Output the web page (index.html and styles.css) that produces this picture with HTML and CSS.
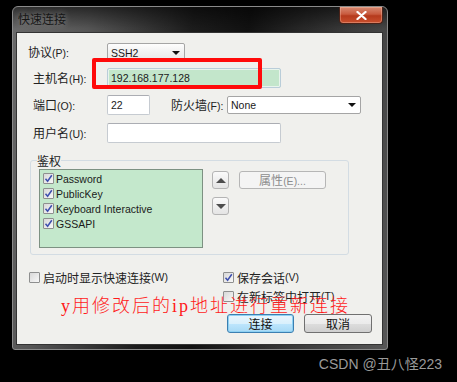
FILE: index.html
```html
<!DOCTYPE html>
<html lang="zh-CN">
<head>
    <meta charset="UTF-8">
    <meta name="viewport" content="width=device-width, initial-scale=1.0">
    <title>快速连接</title>
    <link rel="stylesheet" href="styles.css">
</head>
<body>
    <div class="dialog">
        <div class="title-bar">
            <span class="title">快速连接</span>
            <button class="close-btn" aria-label="关闭">
                <svg width="11" height="9" viewBox="0 0 11 9"><path d="M1.5 1 L9.5 8 M9.5 1 L1.5 8" stroke="#fff" stroke-width="2.3" stroke-linecap="round"/></svg>
            </button>
        </div>

        <div class="client">
            <div class="form-row protocol-row">
                <label class="field-label">协议<span class="key">(P):</span></label>
                <div class="dropdown protocol-select"><span>SSH2</span><i class="drop-arrow"></i></div>
            </div>

            <div class="form-row host-row">
                <label class="field-label indent">主机名<span class="key">(H):</span></label>
                <div class="text-box host-input">192.168.177.128</div>
            </div>

            <div class="form-row port-row">
                <label class="field-label indent">端口<span class="key">(O):</span></label>
                <div class="text-box port-input">22</div>
                <label class="field-label firewall-label">防火墙<span class="key">(F):</span></label>
                <div class="dropdown firewall-select"><span>None</span><i class="drop-arrow"></i></div>
            </div>

            <div class="form-row user-row">
                <label class="field-label indent">用户名<span class="key">(U):</span></label>
                <div class="text-box user-input"></div>
            </div>

            <fieldset class="auth-group">
                <legend>鉴权</legend>
                <div class="auth-body">
                    <ul class="auth-list">
                        <li><span class="check"><svg viewBox="0 0 9 9"><path d="M1.5 4.8 L3.6 7.3 L7.8 1.2" /></svg></span>Password</li>
                        <li><span class="check"><svg viewBox="0 0 9 9"><path d="M1.5 4.8 L3.6 7.3 L7.8 1.2" /></svg></span>PublicKey</li>
                        <li><span class="check"><svg viewBox="0 0 9 9"><path d="M1.5 4.8 L3.6 7.3 L7.8 1.2" /></svg></span>Keyboard Interactive</li>
                        <li><span class="check"><svg viewBox="0 0 9 9"><path d="M1.5 4.8 L3.6 7.3 L7.8 1.2" /></svg></span>GSSAPI</li>
                    </ul>
                    <div class="order-btns">
                        <button class="small-btn" aria-label="上移"><i class="tri-up"></i></button>
                        <button class="small-btn" aria-label="下移"><i class="tri-down"></i></button>
                    </div>
                    <button class="props-btn" disabled>属性<span class="key">(E)...</span></button>
                </div>
            </fieldset>

            <div class="options">
                <label class="option"><span class="check"></span>启动时显示快速连接<span class="key">(W)</span></label>
                <label class="option"><span class="check"><svg viewBox="0 0 9 9"><path d="M1.5 4.8 L3.6 7.3 L7.8 1.2" /></svg></span>保存会话<span class="key">(V)</span></label>
                <label class="option option-tab"><span class="check"></span>在新标签中打开<span class="key">(T)</span></label>
            </div>

            <div class="actions">
                <button class="btn btn-default">连接</button>
                <button class="btn">取消</button>
            </div>

            <!-- annotations drawn on top of the screenshot -->
            <div class="highlight-box"></div>
            <p class="annotation">y用修改后的ip地址进行重新连接</p>
        </div>
    </div>

    <div class="watermark">CSDN @丑八怪223</div>
</body>
</html>
```

FILE: styles.css
```css
* {
    box-sizing: border-box;
}

body {
    margin: 0;
    background: #000;
    width: 457px;
    height: 382px;
    overflow: hidden;
    font-family: "Liberation Sans", "Noto Sans CJK SC", sans-serif;
    font-size: 12px;
    color: #1b1b1b;
}

/* window frame */
.dialog {
    width: 376px;
    height: 344px;
    margin: 6px 0 0 12px;
    padding: 0 4px 4px 3px;
    border: 1px solid #8a8a8a;
    border-radius: 6px 6px 3px 3px;
    background:
        linear-gradient(to bottom, rgba(0, 0, 0, 0.55) 0, rgba(0, 0, 0, 0) 22px),
        linear-gradient(100deg, #6a6a6a 0%, #555 18%, #1c1c1c 42%, #111 55%, #3a3a3a 78%, #575757 100%);
}

.title-bar {
    display: flex;
    align-items: flex-start;
    height: 25px;
    padding-left: 2px;
}

.title {
    margin-top: 4px;
    line-height: 16px;
    font-family: "Noto Sans CJK SC", sans-serif;
    font-size: 12px;
    color: #161616;
    text-shadow: 0 0 6px rgba(255, 255, 255, 0.45);
}

.close-btn {
    margin-left: auto;
    width: 44px;
    height: 17px;
    padding: 0;
    display: flex;
    align-items: center;
    justify-content: center;
    border: 1px solid #4a2218;
    border-top: none;
    border-radius: 0 0 4px 4px;
    background: linear-gradient(to bottom, #d88a72 0%, #c85a3e 45%, #b53a1d 55%, #c9502e 100%);
    box-shadow: inset 0 0 0 1px rgba(255, 210, 190, 0.35);
}

/* client area */
.client {
    position: relative;
    height: 313px;
    padding: 10px 10px 0 11px;
    border: 1px solid #333;
    background: #f0f0ed;
}

.key {
    font-family: "Liberation Sans", sans-serif;
    font-size: 10.5px;
}

.form-row {
    display: flex;
    align-items: center;
}

.protocol-row {
    height: 19px;
}

.host-row {
    margin-top: 6px;
    height: 20px;
}

.port-row {
    margin-top: 7px;
    height: 20px;
}

.user-row {
    margin-top: 8px;
    height: 20px;
}

.field-label {
    width: 79px;
    flex: none;
    font-family: "Noto Sans CJK SC", sans-serif;
    font-size: 12px;
    line-height: 16px;
    color: #222;
}

.field-label.indent {
    padding-left: 5px;
}

.firewall-label {
    width: 56px;
    margin-left: 21px;
}

.text-box {
    height: 20px;
    padding: 1px 3px;
    border: 1px solid #c6cbd1;
    border-top-color: #abadb3;
    border-radius: 2px;
    background: #fff;
    font-size: 10.5px;
    line-height: 16px;
    color: #1a1a1a;
}

.host-input {
    width: 174px;
    background: #c3e6cb;
    border-color: #b9cdd9;
    box-shadow: inset 0 0 0 1px #e8f4ec;
}

.port-input {
    width: 43px;
}

.user-input {
    width: 174px;
}

.dropdown {
    display: flex;
    align-items: center;
    justify-content: space-between;
    height: 19px;
    padding: 0 4px 0 3px;
    border: 1px solid #a5a5a5;
    border-radius: 2px;
    background: linear-gradient(to bottom, #fdfdfd 0%, #f1f1f1 50%, #e6e6e6 100%);
    font-size: 10.5px;
    color: #1a1a1a;
}

.protocol-select {
    width: 78px;
}

.firewall-select {
    width: 134px;
    height: 18px;
    background: #fff;
}

.drop-arrow {
    width: 0;
    height: 0;
    border-left: 4px solid transparent;
    border-right: 4px solid transparent;
    border-top: 4px solid #111;
}

/* authentication group */
.auth-group {
    width: 319px;
    margin: 9px 0 0 2px;
    padding: 0 0 6px 8px;
    border: 1px solid #d3dce3;
    border-radius: 3px;
}

.auth-group legend {
    margin-left: -2px;
    padding: 0;
    font-family: "Noto Sans CJK SC", sans-serif;
    font-size: 12px;
    line-height: 17px;
    color: #222;
}

.auth-body {
    display: flex;
    align-items: flex-start;
}

.auth-list {
    width: 164px;
    height: 79px;
    margin: 0;
    padding: 1px 3px;
    list-style: none;
    border: 1px solid #7d9182;
    background: #c4e8cc;
}

.auth-list li {
    display: flex;
    align-items: center;
    height: 15px;
    font-size: 10.5px;
    color: #1a1a1a;
}

.check {
    flex: none;
    width: 11px;
    height: 11px;
    margin-right: 2px;
    border: 1px solid #8e8f8f;
    border-radius: 1px;
    background: linear-gradient(to bottom right, #d8d8d8, #f8f8f8);
}

.check svg {
    display: block;
    width: 9px;
    height: 9px;
}

.check path {
    fill: none;
    stroke: #3d4fae;
    stroke-width: 1.5;
}

.order-btns {
    display: flex;
    flex-direction: column;
    gap: 8px;
    margin: 2px 0 0 9px;
}

.small-btn {
    display: flex;
    align-items: center;
    justify-content: center;
    width: 17px;
    height: 18px;
    padding: 0;
    border: 1px solid #b4b4b4;
    border-radius: 3px;
    background: linear-gradient(to bottom, #fafafa, #e4e4e4);
}

.tri-up,
.tri-down {
    width: 0;
    height: 0;
    border-left: 5px solid transparent;
    border-right: 5px solid transparent;
}

.tri-up {
    border-bottom: 5px solid #4d4d4d;
}

.tri-down {
    border-top: 5px solid #4d4d4d;
}

.props-btn {
    width: 87px;
    height: 18px;
    margin: 2px 0 0 10px;
    padding: 0;
    border: 1px solid #b6b6b6;
    border-radius: 3px;
    background: #f4f4f4;
    font-family: "Noto Sans CJK SC", sans-serif;
    font-size: 12px;
    line-height: 14px;
    color: #8d8d8d;
}

/* bottom options */
.options {
    display: grid;
    grid-template-columns: 194px auto;
    row-gap: 5px;
    margin: 15px 0 0 1px;
}

.option {
    display: flex;
    align-items: center;
    height: 14px;
    font-family: "Noto Sans CJK SC", sans-serif;
    font-size: 12px;
    color: #222;
}

.option .check {
    margin-right: 3px;
}

.option-tab {
    grid-column: 2;
}

.actions {
    display: flex;
    justify-content: flex-end;
    gap: 10px;
    margin-top: 11px;
}

.btn {
    width: 68px;
    height: 19px;
    padding: 0;
    border: 1px solid #707070;
    border-radius: 3px;
    background: linear-gradient(to bottom, #f2f2f2 0%, #ebebeb 50%, #dddddd 51%, #cfcfcf 100%);
    font-family: "Noto Sans CJK SC", sans-serif;
    font-size: 12px;
    line-height: 15px;
    color: #111;
}

.btn-default {
    width: 67px;
    border-color: #3c7fb1;
    background: linear-gradient(to bottom, #eaf6fd 0%, #d9f0fc 50%, #bee6fd 51%, #a7d9f5 100%);
    box-shadow: inset 0 0 0 1px #8ed1f3;
}

/* red annotation overlays */
.highlight-box {
    position: absolute;
    left: 75px;
    top: 25px;
    width: 170px;
    height: 31px;
    border: 4px solid #ff0a0a;
    border-radius: 2px;
}

.annotation {
    position: absolute;
    left: 44px;
    top: 263px;
    margin: 0;
    font-family: "Liberation Serif", "Noto Sans CJK SC", serif;
    font-size: 18px;
    font-weight: 300;
    line-height: 20px;
    letter-spacing: 2px;
    color: #ff1a1a;
}

.watermark {
    margin-top: 6px;
    padding-right: 15px;
    text-align: right;
    font-size: 14px;
    line-height: 16px;
    color: #9a9a9a;
}
```
